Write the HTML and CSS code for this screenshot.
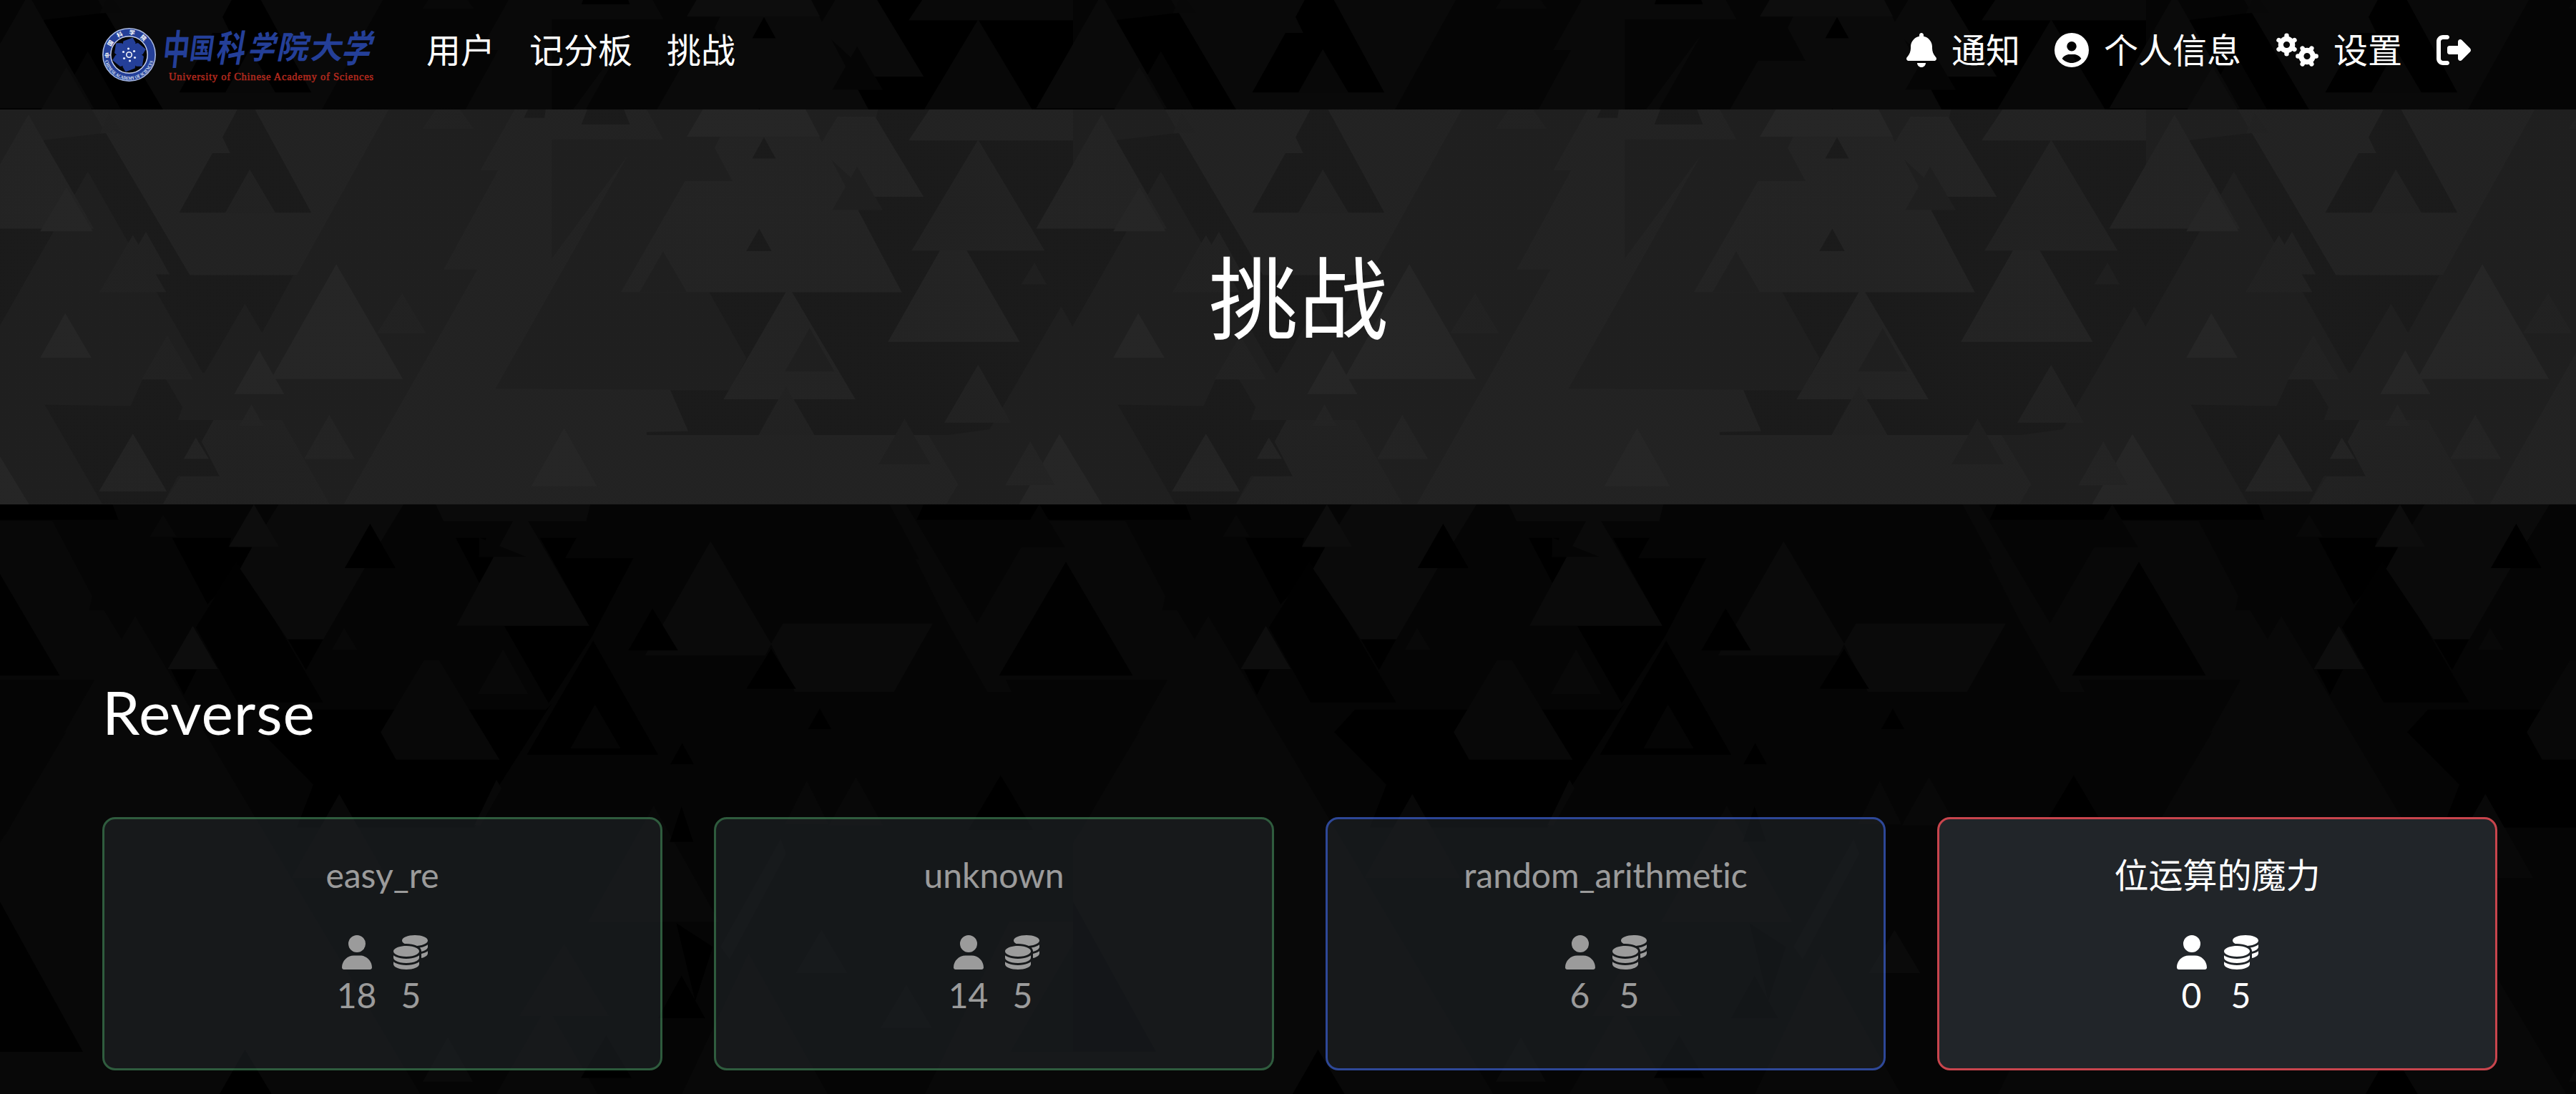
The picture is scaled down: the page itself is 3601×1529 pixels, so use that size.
FILE: index.html
```html
<!DOCTYPE html>
<html lang="zh">
<head>
<meta charset="utf-8">
<title>挑战</title>
<link rel="stylesheet" href="styles.css">
</head>
<body>
<svg class="sprite" aria-hidden="true">
  <symbol id="user" viewBox="0 0 448 512"><path d="M224 256A128 128 0 1 0 224 0a128 128 0 1 0 0 256zm-45.7 48C79.8 304 0 383.8 0 482.3C0 498.7 13.3 512 29.7 512H418.3c16.4 0 29.7-13.3 29.7-29.7C448 383.8 368.2 304 269.7 304H178.3z"/></symbol>
  <symbol id="coins" viewBox="0 0 512 512"><path d="M512 80c0 18-14.3 34.6-38.4 48c-29.1 16.1-72.5 27.5-122.3 30.9c-3.7-1.8-7.4-3.5-11.3-5C300.6 137.4 248.2 128 192 128c-8.3 0-16.4 .2-24.5 .6l-1.1-.6C142.3 114.6 128 98 128 80c0-44.2 86-80 192-80S512 35.8 512 80zM160.7 161.1c10.2-.7 20.7-1.1 31.3-1.1c62.2 0 117.4 12.3 152.5 31.4C369.3 204.9 384 221.7 384 240c0 4-.7 7.9-2.1 11.7c-4.6 13.2-17 25.3-35 35.5c-.1 .1-.3 .1-.4 .2c-.3 .2-.6 .3-.9 .5c-35 19.4-90.8 32-153.6 32c-59.6 0-112.9-11.3-148.2-29.1c-1.9-.9-3.7-1.9-5.5-2.9C14.3 274.6 0 258 0 240c0-34.8 53.4-64.5 128-75.4c10.5-1.5 21.4-2.7 32.7-3.5zM416 240c0-21.9-10.6-39.9-24.1-53.4c28.3-4.4 54.2-11.4 76.2-20.5c16.3-6.8 31.5-15.2 43.9-25.5V176c0 19.3-16.5 37.1-43.8 50.9c-14.6 7.4-32.4 13.7-52.4 18.5c.1-1.8 .2-3.5 .2-5.3zm-32 96c0 18-14.3 34.6-38.4 48c-1.8 1-3.6 1.9-5.5 2.9C304.9 404.7 251.6 416 192 416c-62.8 0-118.6-12.6-153.6-32C14.3 370.6 0 354 0 336V300.6c12.5 10.3 27.6 18.7 43.9 25.5C83.4 342.6 135.8 352 192 352s108.6-9.4 148.1-25.9c7.8-3.2 15.3-6.9 22.4-10.9c6.1-3.4 11.8-7.2 17.2-11.2c1.5-1.1 2.9-2.3 4.3-3.4V304v5.7V336zm32 0V304 278.1c19-4.2 36.5-9.5 52.1-16c16.3-6.8 31.5-15.2 43.9-25.5V272c0 10.5-5 21-14.9 30.9c-16.3 16.3-45 29.7-81.3 38.4c.1-1.7 .2-3.5 .2-5.3zM192 448c56.2 0 108.6-9.4 148.1-25.9c16.3-6.8 31.5-15.2 43.9-25.5V432c0 44.2-86 80-192 80S0 476.2 0 432V396.6c12.5 10.3 27.6 18.7 43.9 25.5C83.4 438.6 135.8 448 192 448z"/></symbol>
</svg>

<header class="navbar">
  <a class="brand">
    <svg class="logo" viewBox="0 0 381 76">
      <defs>
        <path id="arc-top" d="M10.5 42A27.5 27.5 0 1 1 64.500 42"/>
        <path id="arc-bottom" d="M3.500 46A35 35 0 0 0 71.500 46"/>
      </defs>
      <circle cx="37.500" cy="37.500" r="36.700" fill="#243f98" stroke="#a9b9e0" stroke-width="1.600"/>
      <circle cx="37.500" cy="37.500" r="25.700" fill="#050505" stroke="#c3cdea" stroke-width="1.500"/>
      <g fill="#243f98" transform="translate(37.500 37.500)">
        <path id="blade" d="M-4 -5L-10 -11L-8 -19L5 -24L9 -17L6 -4z"/>
        <use href="#blade" transform="rotate(60)"/><use href="#blade" transform="rotate(120)"/><use href="#blade" transform="rotate(180)"/><use href="#blade" transform="rotate(240)"/><use href="#blade" transform="rotate(300)"/>
        <circle r="8"/>
        <circle r="3.700" fill="none" stroke="#fff" stroke-width="1.500"/>
        <g fill="#e8ecfa"><circle cx="-1" cy="-8.500" r="1.600"/><circle cx="7" cy="-5" r="1.600"/><circle cx="8" cy="4" r="1.600"/><circle cx="1" cy="8.500" r="1.600"/><circle cx="-7" cy="5" r="1.600"/><circle cx="-8" cy="-4" r="1.600"/></g>
      </g>
      <text class="seal-zh"><textPath href="#arc-top" textLength="72">中国科学院</textPath></text>
      <text class="seal-en"><textPath href="#arc-bottom" textLength="92" lengthAdjust="spacingAndGlyphs">CHINESE ACADEMY OF SCIENCES</textPath></text>
      <g class="brush">
        <text transform="translate(83 51) skewX(-6) scale(.88 1.35)">中</text>
        <text transform="translate(121 43) skewX(-8) scale(.8 .95)">国</text>
        <text transform="translate(158 47) skewX(-10) scale(.95 1.22)">科</text>
        <text transform="translate(202 43) skewX(-16) scale(.9 1.05)">学</text>
        <text transform="translate(243 43) skewX(-12) scale(1.05 1.05)">院</text>
        <text transform="translate(290 43) skewX(-8) scale(1.08 1)">大</text>
        <text transform="translate(332 48) skewX(-18) scale(.95 1.25)">学</text>
      </g>
      <text class="brand-en" x="93" y="72.500" textLength="286">University of Chinese Academy of Sciences</text>
    </svg>
  </a>
  <nav class="menu">
    <a>用户</a>
    <a>记分板</a>
    <a>挑战</a>
  </nav>
  <nav class="menu account">
    <a><svg class="icon narrow" viewBox="0 0 448 512"><path d="M224 0c-17.700 0-32 14.300-32 32V51.200C119 66 64 130.600 64 208v18.800c0 47-17.300 92.400-48.500 127.600l-7.400 8.300c-8.400 9.400-10.400 22.900-5.300 34.400S19.400 416 32 416H416c12.600 0 24-7.400 29.200-18.900s3.100-25-5.300-34.400l-7.400-8.300C401.300 319.200 384 273.900 384 226.800V208c0-77.400-55-142-128-156.800V32c0-17.700-14.300-32-32-32zm45.300 493.300c12-12 18.700-28.300 18.700-45.300H224 160c0 17 6.700 33.300 18.700 45.300s28.300 18.700 45.300 18.700s33.300-6.700 45.300-18.700z"/></svg>通知</a>
    <a><svg class="icon" viewBox="0 0 512 512"><path d="M399 384.200C376.900 345.800 335.400 320 288 320H224c-47.400 0-88.900 25.800-111 64.200c35.200 39.200 86.200 63.800 143 63.800s107.800-24.700 143-63.800zM0 256a256 256 0 1 1 512 0A256 256 0 1 1 0 256zm256 16a72 72 0 1 0 0-144 72 72 0 1 0 0 144z"/></svg>个人信息</a>
    <a><svg class="icon wide" viewBox="0 0 60 48">
      <g transform="translate(15.500 16.500)">
        <circle r="8.200" fill="none" stroke="#fff" stroke-width="7.200"/>
        <path stroke="#fff" stroke-width="6.400" stroke-linecap="round" d="M0 -10V-12.700M0 10V12.700M8.700 -5L11 -6.400M-8.700 -5L-11 -6.400M8.700 5L11 6.400M-8.700 5L-11 6.400"/>
      </g>
      <g transform="translate(44 32.500) rotate(90)">
        <circle r="8.200" fill="none" stroke="#fff" stroke-width="7.200"/>
        <path stroke="#fff" stroke-width="6.400" stroke-linecap="round" d="M0 -10V-12.700M0 10V12.700M8.700 -5L11 -6.400M-8.700 -5L-11 -6.400M8.700 5L11 6.400M-8.700 5L-11 6.400"/>
      </g>
    </svg>设置</a>
    <a><svg class="icon" viewBox="0 0 512 512"><path d="M377.900 105.900L500.700 228.700c7.200 7.200 11.300 17.100 11.300 27.300s-4.100 20.100-11.300 27.300L377.900 406.100c-6.400 6.400-15 9.900-24 9.900c-18.700 0-33.900-15.200-33.900-33.900l0-62.100-128 0c-17.700 0-32-14.300-32-32l0-64c0-17.700 14.300-32 32-32l128 0 0-62.100c0-18.700 15.200-33.900 33.900-33.900c9 0 17.600 3.600 24 9.900zM160 96L96 96c-17.700 0-32 14.300-32 32l0 256c0 17.700 14.300 32 32 32l64 0c17.700 0 32 14.300 32 32s-14.300 32-32 32l-64 0c-53 0-96-43-96-96L0 128C0 75 43 32 96 32l64 0c17.700 0 32 14.300 32 32s-14.300 32-32 32z"/></svg></a>
  </nav>
</header>

<section class="jumbotron"><h1>挑战</h1></section>

<main class="board">
  <h3>Reverse</h3>
  <div class="cards">
    <article class="card solved">
      <p>easy_re</p>
      <div class="stats">
        <span><svg class="icon narrow"><use href="#user"/></svg>18</span>
        <span><svg class="icon"><use href="#coins"/></svg>5</span>
      </div>
    </article>
    <article class="card solved">
      <p>unknown</p>
      <div class="stats">
        <span><svg class="icon narrow"><use href="#user"/></svg>14</span>
        <span><svg class="icon"><use href="#coins"/></svg>5</span>
      </div>
    </article>
    <article class="card first">
      <p>random_arithmetic</p>
      <div class="stats">
        <span><svg class="icon narrow"><use href="#user"/></svg>6</span>
        <span><svg class="icon"><use href="#coins"/></svg>5</span>
      </div>
    </article>
    <article class="card open">
      <p>位运算的魔力</p>
      <div class="stats">
        <span><svg class="icon narrow"><use href="#user"/></svg>0</span>
        <span><svg class="icon"><use href="#coins"/></svg>5</span>
      </div>
    </article>
  </div>
</main>
</body>
</html>
```
FILE: styles.css
```css
:root {
  /* tiled triangle texture shared by the navbar and the banner */
  --peaks: url("data:image/svg+xml,%3Csvg xmlns='http://www.w3.org/2000/svg' width='1500' height='552' viewBox='0 35 1809 1492' preserveAspectRatio='none'%3E%3Crect y='35' width='1809' height='1492' fill='%23050505'/%3E%3Cg id='a'%3E%3Cpath fill='%23000' d='M1480 35H1809V1200L1600 1265H1280L1310 1130H1222L1258 975L1195 725H1520L1440 415zM75 150L190 120L325 660H495L443 875L345 1030H0V300z'/%3E%3Cpath fill='%23090909' d='M155 35H655L500 660H320zM1567 35H1957L1987 152H1532zM868 35H1090L1118 148H930L1058 210L835 1090H1160L1280 1265H1565L1635 1525H580L805 640H748L840 265H810z'/%3E%3Cpath fill='%23000' d='M400 35H430L525 425H302L358 200H388L375 140zM1130 1095H1228L1310 1130L1280 1265H1090V1253L1160 1250z'/%3E%3Cpath fill='%23050505' d='M148 270l225 885h-450zM413 770l105 400h-210zM930 148H1118L1205 180L1235 305H1155L1118 445L1160 725H1195L1258 975L1228 1095L835 1090L1058 210L930 600zM1789 780l190 747h-384z'/%3E%3Cpath fill='%230a0a0a' d='M1155 305H1235L1205 180L1215 135H1380L1520 725H1047zM1330 705l112 425h-222zM1607 480l112 433h-222zM1857 55l110 430h-220zM48 55l110 430h-220zM1412 62H1475L1557 365H1470L1380 180z'/%3E%3Cpath fill='%23080808' d='M1649 150l112 418h-224zM1649 1000l55 218h-112zM1325 1080l48 185h-94zM421 262l43 163h-84zM246 498l40 160h-82zM224 510l56 215h-112zM282 890l43 165h-86zM678 730l40 150h-82zM735 35H775L798 107H713zM183 45l26 80h-40zM360 1208H475L555 1525H275L305 1422L370 1420L340 1290z'/%3E%3Cpath fill='%23000' d='M75 1150L220 1155L240 1055H280L308 1160L300 1208H360L340 1290L370 1420H300L275 1525H172zM1280 485l21 85h-43zM1288 140l20 80h-40zM990 35H1052L1062 92H980zM890 35H920L918 67H883z'/%3E%3Cpath fill='%23050505' d='M1118 570l40 155h-80zM1445 250l43 165h-85zM1365 860l42 165h-84zM1525 1205l44 170h-88zM1744 615l20 80h-42z'/%3E%3Cpath fill='%230d0d0d' d='M112 330l44 165h-88zM110 805l44 168h-86zM567 620l112 433h-222zM437 945l42 165h-84zM1185 35H1358L1382 138H1158zM951 1240l55 218h-110zM1786 1262l72 265h-140zM-23 1262l72 265h-140z'/%3E%3Cpath fill='%230a0a0a' d='M224 1260l57 218h-114zM330 1275l22 80h-42zM555 1190l43 165h-85zM1737 1290l42 165h-84zM424 1150l20 80h-40z'/%3E%3C/g%3E%3C/svg%3E");
  /* taller tile behind the challenge board */
  --forest: url("data:image/svg+xml,%3Csvg xmlns='http://www.w3.org/2000/svg' width='1500' height='824' viewBox='0 45 1809 2472' preserveAspectRatio='none'%3E%3Crect y='45' width='1809' height='2472' fill='%23050505'/%3E%3Cg id='a'%3E%3Cpath fill='%23080808' d='M0 115H88L155 430L150 490H175L300 1000H0zM228 515l480 2002h-960zM1722 225H1795L1767 115H1809V780H1665L1625 640zM1497 45H1527L1660 600L1705 830H1665L1597 535z'/%3E%3Cpath fill='%23050505' d='M0 780H160L10 1430H0z'/%3E%3Cpath fill='%23000' d='M1557 45H1809V110H1545zM0 45H190L200 110H0zM290 185H390L386 222L425 225L405 315L350 465zM768 185H820L807 265H835L808 375zM910 185H972L953 270H1068L998 600L925 880L850 555H993zM485 610H545L516 740zM475 905H920L930 880L840 1230L800 1400H500L528 1220L440 1000z'/%3E%3Cpath fill='%23010101' d='M1797 285l113 478h-226zM-12 285l113 478h-226zM398 290L330 560L400 875H545L433 400zM0 1710L140 2340H0z'/%3E%3Cpath fill='%230a0a0a' d='M470 45H680L615 310L545 610H485L405 315L425 225zM735 45H995L988 115H748zM865 115H890L993 553H770zM1198 200L1300 630L1290 677H1088zM1320 545H1572L1507 830H1340L1300 630z'/%3E%3Cpath fill='%23050505' d='M1752 45l44 180h-86zM1380 45H1500L1550 275H1330zM808 185l80 80h-80z'/%3E%3Cpath fill='%23080808' d='M848 655l42 185h-84zM715 700H740L842 1115H668L642 1000zM580 565l22 90h-42zM275 90l22 90h-44zM837 1200L845 1235L810 1390H800zM1360 1205l36 180h-72zM1443 1190l45 200h-90zM572 1260l80 350h-160zM951 1890l75 300h-150zM1102 1310l110 485h-220zM1702 1795H1817L1985 2517H1560zM1262 1930L1395 2517H1150zM922 2150l85 367h-170z'/%3E%3Cpath fill='%23000' d='M624 125l43 187h-86zM1100 480l43 177h-84zM1300 650l42 168h-84zM1000 615l110 480h-222zM288 737H332L310 845zM1150 1045l20 90h-40zM1382 900l20 88h-40zM1687 1180l55 230h-110zM1149 1310l20 150h-40zM1149 2020l40 180h-80zM413 2330l45 187h-88zM1022 2270l43 180h-86zM1140 1800l62 100l-30 230z'/%3E%3Cpath fill='%23050505' d='M1003 885l43 183h-84zM1815 1860l112 480h-224z'/%3E%3Cpath fill='%230d0d0d' d='M428 45l42 178h-84zM325 555l42 180h-84z'/%3E%3Cpath fill='%230a0a0a' d='M1316 1450L1325 1510L1230 1950L1215 1900zM1385 1830l43 180h-86zM1528 2060l43 180h-86zM755 2280l42 185h-84z'/%3E%3C/g%3E%3C/svg%3E");
}

* { box-sizing: border-box; }

body {
  margin: 0;
  height: 1529px;
  overflow: hidden;
  display: flex;
  flex-direction: column;
  background: #050505;
  color: #fff;
  font: 400 48px/1.5 Lato, "Noto Sans CJK SC", sans-serif;
  font-variant-ligatures: none;
}

.sprite { display: none; }

.icon { width: 48px; height: 48px; fill: currentColor; flex: none; }
.icon.narrow { width: 42px; }
.icon.wide { width: 60px; }

.navbar {
  flex: none;
  display: flex;
  height: 153px;
  padding: 33px 147px 0 143px;
  background: var(--peaks) 0 -15px repeat-x;
}

.brand { padding-top: 6px; margin-right: 72px; }
.logo { display: block; width: 381px; height: 76px; overflow: visible; }
.brush { font: 700 42px "Noto Sans CJK SC", sans-serif; fill: #243f98; }
.brand-en { font: 400 14.5px "Liberation Serif", serif; fill: #b52a1e; stroke: #b52a1e; stroke-width: .5px; }
.seal-zh { font: 700 8px "Noto Sans CJK SC", sans-serif; fill: #fff; }
.seal-en { font: 700 7px "Liberation Serif", serif; fill: #dfe5f6; }

.menu { display: flex; gap: 48px; height: 74px; }
.menu a { display: flex; align-items: center; gap: 21px; white-space: nowrap; }
.account { margin-left: auto; }

.jumbotron {
  flex: none;
  height: 552px;
  display: flex;
  justify-content: center;
  padding-top: 191px;
  background: linear-gradient(rgba(180, 180, 180, .15), rgba(180, 180, 180, .15)), var(--peaks) 0 0 repeat-x;
}

h1 { margin: 0 0 0 30px; font-size: 125px; font-weight: 400; line-height: 144px; letter-spacing: 1px; }

.board {
  flex: 1;
  padding: 239px 110px 0 143px;
  background: var(--forest) 0 0 repeat-x;
}

h3 { margin: 0; font-size: 84px; font-weight: 400; line-height: 101px; letter-spacing: 1px; }

.cards {
  display: grid;
  grid-template-columns: repeat(4, 1fr);
  gap: 72px;
  margin-top: 97px;
}

.card {
  height: 354px;
  padding-top: 42px;
  border: 3px solid;
  border-radius: 18px;
  background: #212529;
  text-align: center;
  opacity: .6;
}

.card p { margin: 0; line-height: 72px; }
.solved { border-color: #4a9563; }
.first { border-color: #4874f8; }
.open { border-color: #c8454d; opacity: 1; }

.stats { display: flex; justify-content: center; gap: 24px; margin-top: 48px; }
.stats span { display: flex; flex-direction: column; align-items: center; line-height: 72px; }
```
